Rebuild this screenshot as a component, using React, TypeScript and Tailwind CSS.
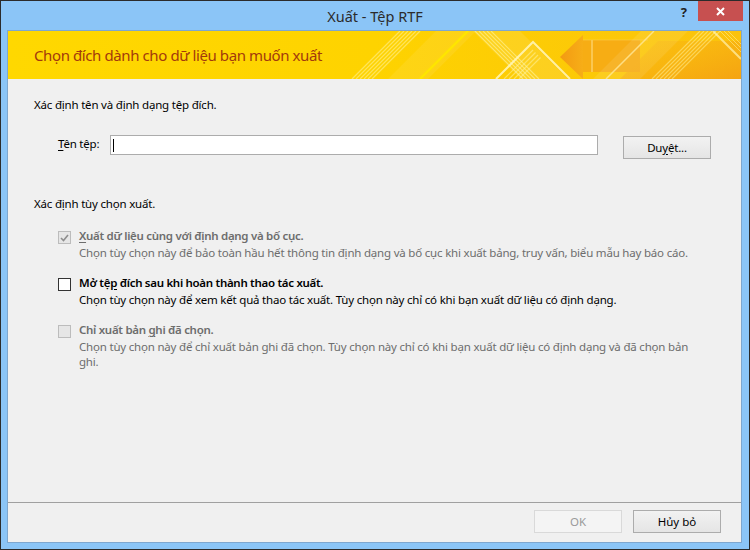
import React from "react";

function Banner() {
  return (
    <div className="relative h-[48px] shrink-0 overflow-hidden bg-linear-to-r from-[#ffd800] via-[#fed300] to-[#fbc20c] flex items-center pl-[26px]">
      <svg className="absolute left-0 top-0" width="733" height="48" viewBox="0 0 733 48">
        <defs>
          <linearGradient id="orng" x1="0" y1="0" x2="1" y2="0">
            <stop offset="0" stopColor="#f39a12" />
            <stop offset="1" stopColor="#f7ae17" />
          </linearGradient>
          <linearGradient id="rgt" x1="0" y1="0" x2="1" y2="1">
            <stop offset="0" stopColor="#f9b514" stopOpacity="0.3" />
            <stop offset="1" stopColor="#f4a012" stopOpacity="0.9" />
          </linearGradient>
        </defs>
        {[0, 1, 2, 3, 4, 5].map((i) => (
          <line key={"a" + i} x1={344 + i * 4} y1={48} x2={392 + i * 4} y2={0} stroke="#fff3a0" strokeOpacity="0.55" strokeWidth="1.3" />
        ))}
        <polygon points="380,48 420,48 468,0 428,0" fill="#fff" fillOpacity="0.08" />
        <line x1="412" y1="48" x2="460" y2="0" stroke="#ffe500" strokeWidth="2.5" />
        <polygon points="465,0 512,0 560,48 513,48" fill="#fff" fillOpacity="0.1" />
        {[0, 1, 2, 3, 4].map((i) => (
          <line key={"b" + i} x1={467 + i * 4} y1={0} x2={515 + i * 4} y2={48} stroke="#fff3a0" strokeOpacity="0.6" strokeWidth="1.2" />
        ))}
        <polyline points="488,48 525,11 562,48" fill="none" stroke="#fff7c0" strokeOpacity="0.85" strokeWidth="2" />
        {[0, 1, 2, 3].map((i) => (
          <line key={"c" + i} x1={496 + i * 5} y1={48} x2={525 + i * 2.5} y2={19 + i * 2.5} stroke="#fff3a0" strokeOpacity="0.55" strokeWidth="1.2" />
        ))}
        <polygon points="552,26 575,4 575,48" fill="url(#orng)" />
        <rect x="575" y="9" width="57" height="32" fill="#f6a816" fillOpacity="0.85" />
        <line x1="584" y1="9" x2="584" y2="41" stroke="#ffe08a" strokeOpacity="0.7" strokeWidth="1.5" />
        <line x1="575" y1="9" x2="640" y2="9" stroke="#fbd04a" strokeOpacity="0.6" strokeWidth="1" />
        <polygon points="650,10 733,10 733,48 612,48" fill="url(#rgt)" />
        <polygon points="585,48 632,48 680,0 633,0" fill="#fff" fillOpacity="0.09" />
        <line x1="598" y1="48" x2="646" y2="0" stroke="#ffe89a" strokeOpacity="0.8" strokeWidth="1.5" />
        {[0, 1, 2, 3, 4, 5].map((i) => (
          <line key={"d" + i} x1={644 + i * 4} y1={48} x2={692 + i * 4} y2={0} stroke="#fff3a0" strokeOpacity="0.5" strokeWidth="1.2" />
        ))}
        <line x1="705" y1="0" x2="733" y2="28" stroke="#fff3b0" strokeOpacity="0.7" strokeWidth="2" />
        {[0, 1, 2].map((i) => (
          <line key={"e" + i} x1={712 + i * 4} y1={0} x2={733} y2={21 - i * 4} stroke="#fff3a0" strokeOpacity="0.5" strokeWidth="1" />
        ))}
      </svg>
      <span className="relative text-[15px] tracking-[-0.4px] text-[#a33a0c] leading-[20px]">Chọn đích dành cho dữ liệu bạn muốn xuất</span>
    </div>
  );
}

function Checkbox({ state }: { state: "checked-disabled" | "empty" | "disabled" }) {
  if (state === "empty") {
    return <div className="w-[13px] h-[13px] border border-[#333333] bg-white shrink-0 mt-[3px]" />;
  }
  return (
    <div className="w-[13px] h-[13px] border border-[#bcbcbc] bg-[#e6e6e6] shrink-0 mt-[3px] flex items-center justify-center">
      {state === "checked-disabled" && (
        <svg width="9" height="8" viewBox="0 0 9 8">
          <path d="M1 4 L3.5 6.5 L8 1" fill="none" stroke="#8d8d8d" strokeWidth="1.6" />
        </svg>
      )}
    </div>
  );
}

export default function App() {
  return (
    <div className="w-[750px] h-[550px] bg-[#8bc5f7] border border-[#2b2b2b] flex flex-col font-['Noto_Sans','Open_Sans',sans-serif] text-black overflow-hidden">
      <div className="relative h-[29px] shrink-0 flex items-center justify-center">
        <span className="text-[14.5px] text-[#2b2b2b] leading-none mt-[2px]">Xuất - Tệp RTF</span>
        <div className="absolute right-[6px] top-0 flex items-start">
          <span className="mr-[11px] mt-[3px] text-[13px] font-bold text-[#222] leading-[16px]">?</span>
          <div className="w-[45px] h-[20px] bg-[#c75050] flex items-center justify-center">
            <svg width="9" height="9" viewBox="0 0 9 9">
              <path d="M1 1 L8 8 M8 1 L1 8" stroke="#fff" strokeWidth="2" />
            </svg>
          </div>
        </div>
      </div>
      <div className="ml-[6px] mr-[7px] mb-[6px] flex-1 border border-[#7ea7cf] bg-[#f0f0f0] flex flex-col">
        <Banner />
        <div className="flex-1 pl-[26px] pt-[18px] text-[11.5px] tracking-[-0.2px]">
          <p className="leading-[16px]">Xác định tên và định dạng tệp đích.</p>
          <div className="mt-[20px] flex items-start">
            <span className="ml-[24px] w-[52px] leading-[16px] mt-[3px]">
              <span className="underline underline-offset-2">T</span>ên tệp:
            </span>
            <div className="mt-[2px] w-[488px] h-[20px] border border-[#acacac] bg-white flex items-center pl-[2px]">
              <div className="w-[1px] h-[13px] bg-black" />
            </div>
            <button className="ml-[25px] mt-[3px] w-[88px] h-[23px] border border-[#acacac] bg-linear-to-b from-[#f2f2f2] to-[#e5e5e5] leading-none">
              Du<span className="underline underline-offset-2">y</span>ệt...
            </button>
          </div>
          <p className="mt-[37px] leading-[16px]">Xác định tùy chọn xuất.</p>
          <div className="mt-[16px] ml-[24px] flex flex-col gap-[15px]">
            <div className="flex gap-[8px]">
              <Checkbox state="checked-disabled" />
              <div className="text-[#6d6d6d]">
                <p className="leading-[16px] font-semibold tracking-[-0.3px]">
                  <span className="underline underline-offset-2">X</span>uất dữ liệu cùng với định dạng và bố cục.
                </p>
                <p className="mt-[1px] leading-[15px] whitespace-nowrap">
                  Chọn tùy chọn này để bảo toàn hầu hết thông tin định dạng và bố cục khi xuất bảng, truy vấn, biểu mẫu hay báo cáo.
                </p>
              </div>
            </div>
            <div className="flex gap-[8px]">
              <Checkbox state="empty" />
              <div className="text-black">
                <p className="leading-[16px] font-semibold tracking-[-0.3px]">
                  Mở tệ<span className="underline underline-offset-2">p</span> đích sau khi hoàn thành thao tác xuất.
                </p>
                <p className="mt-[1px] leading-[15px] whitespace-nowrap">
                  Chọn tùy chọn này để xem kết quả thao tác xuất. Tùy chọn này chỉ có khi bạn xuất dữ liệu có định dạng.
                </p>
              </div>
            </div>
            <div className="flex gap-[8px]">
              <Checkbox state="disabled" />
              <div className="text-[#6d6d6d]">
                <p className="leading-[16px] font-semibold tracking-[-0.3px]">
                  Chỉ xuất bản <span className="underline underline-offset-2">g</span>hi đã chọn.
                </p>
                <p className="mt-[1px] leading-[15px] whitespace-nowrap">
                  Chọn tùy chọn này để chỉ xuất bản ghi đã chọn. Tùy chọn này chỉ có khi bạn xuất dữ liệu có định dạng và đã chọn bản
                  <br />
                  ghi.
                </p>
              </div>
            </div>
          </div>
        </div>
        <div className="shrink-0 border-t border-[#a0a0a0] flex justify-end gap-[11px] pt-[7px] pb-[9px] pr-[20px] text-[11.5px]">
          <button className="w-[88px] h-[23px] border border-[#d9d9d9] bg-[#f4f4f4] text-[#9a9a9a] leading-none">
            OK
          </button>
          <button className="w-[88px] h-[23px] border border-[#acacac] bg-linear-to-b from-[#f2f2f2] to-[#e5e5e5] leading-none">
            Hủy bỏ
          </button>
        </div>
      </div>
    </div>
  );
}
